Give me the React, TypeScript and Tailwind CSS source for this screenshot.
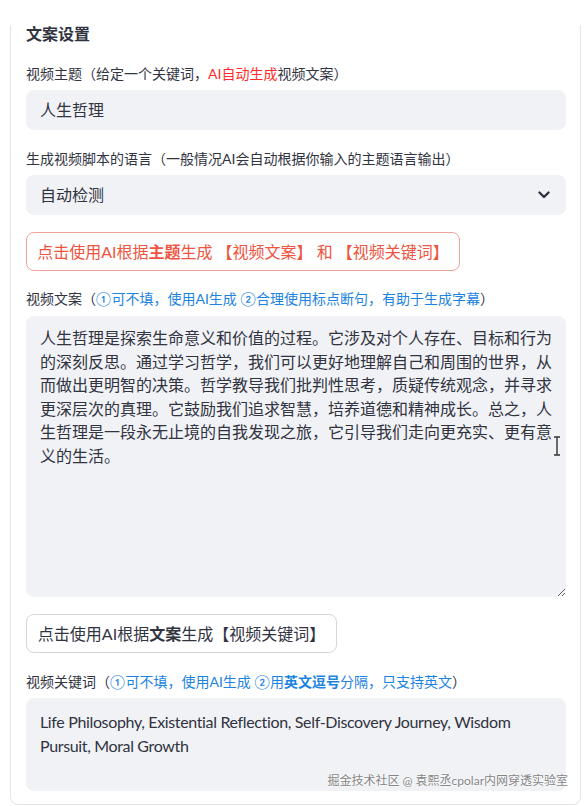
import React from "react";

const FONT = { fontFamily: '"Lato", "Noto Sans CJK SC", sans-serif' };

const content =
  "人生哲理是探索生命意义和价值的过程。它涉及对个人存在、目标和行为的深刻反思。通过学习哲学，我们可以更好地理解自己和周围的世界，从而做出更明智的决策。哲学教导我们批判性思考，质疑传统观念，并寻求更深层次的真理。它鼓励我们追求智慧，培养道德和精神成长。总之，人生哲理是一段永无止境的自我发现之旅，它引导我们走向更充实、更有意义的生活。";

export default function App() {
  return (
    <div className="w-[584px] h-[806px] bg-white overflow-hidden text-[#31333f]" style={FONT}>
      <div className="relative ml-[10px] mt-[27px] w-[571px] border-x border-b border-[#e4e4e7] rounded-b-[8px] pl-[15px] pr-[14px] pb-[13px]">
        <div className="-mt-[2px] text-[16px] leading-[16px] font-bold pt-[1px]">文案设置</div>

        <div className="mt-[22px] text-[14px] leading-[20px]">
          视频主题（给定一个关键词，<span className="text-[#ff2b2b]">AI自动生成</span>视频文案）
        </div>
        <div className="mt-[6px] h-[40px] rounded-[8px] bg-[#f0f2f6] flex items-center pl-[14px] text-[16px]">
          人生哲理
        </div>

        <div className="mt-[19px] text-[14px] leading-[20px]">
          生成视频脚本的语言（一般情况AI会自动根据你输入的主题语言输出）
        </div>
        <div className="mt-[6px] h-[40px] rounded-[8px] bg-[#f0f2f6] flex items-center justify-between pl-[14px] pr-[16px] text-[16px]">
          <span>自动检测</span>
          <svg width="12" height="8" viewBox="0 0 12 8" fill="none">
            <path d="M1.5 1.5 L6 6 L10.5 1.5" stroke="#31333f" strokeWidth="2.4" strokeLinecap="round" strokeLinejoin="round" />
          </svg>
        </div>

        <div className="mt-[17px] w-[434px] h-[39px] rounded-[8px] border border-[#f2a39a] flex items-center justify-center text-[16px] text-[#ee5440]">
          <span>
            点击使用AI根据<span className="font-bold">主题</span>生成 【视频文案】 和 【视频关键词】
          </span>
        </div>

        <div className="mt-[18px] text-[14px] leading-[20px]">
          视频文案（<span className="text-[#1c83e1]">①可不填，使用AI生成 ②合理使用标点断句，有助于生成字幕</span>）
        </div>
        <div className="relative mt-[7px]">
          <textarea
            readOnly
            value={content}
            className="block w-[540px] h-[281px] rounded-[8px] bg-[#f0f2f6] pl-[14px] pr-[12px] pt-[10px] text-[16px] leading-[23.6px] outline-none resize-y"
            style={FONT}
          />
          <svg className="absolute left-[527px] top-[120px]" width="8" height="20" viewBox="0 0 8 20" fill="none">
            <path d="M1 1 H7 M4 1 V19 M1 19 H7" stroke="#333" strokeWidth="1.4" />
          </svg>
        </div>

        <div className="mt-[17px] w-[311px] h-[39px] rounded-[8px] border border-[#d6d6da] bg-white flex items-center justify-center text-[16px]">
          <span>
            点击使用AI根据<span className="font-bold">文案</span>生成【视频关键词】
          </span>
        </div>

        <div className="mt-[19px] text-[14px] leading-[20px]">
          视频关键词（
          <span className="text-[#1c83e1]">
            ①可不填，使用AI生成 ②用<span className="font-bold">英文逗号</span>分隔，只支持英文
          </span>
          ）
        </div>
        <div className="relative mt-[6px] h-[93px] rounded-[8px] bg-[#f0f2f6] pl-[14px] pr-[14px] pt-[12px] text-[16px] leading-[23.6px] tracking-[-0.35px]">
          Life Philosophy, Existential Reflection, Self-Discovery Journey, Wisdom Pursuit, Moral Growth
          <div
            className="absolute right-[-2px] bottom-[2px] text-[12px] leading-[16px] tracking-normal text-[#858585] whitespace-nowrap"
            style={{ textShadow: "0 0 2px #fff, 0 0 2px #fff" }}
          >
            掘金技术社区 @ 袁熙丞cpolar内网穿透实验室
          </div>
        </div>
      </div>
    </div>
  );
}
